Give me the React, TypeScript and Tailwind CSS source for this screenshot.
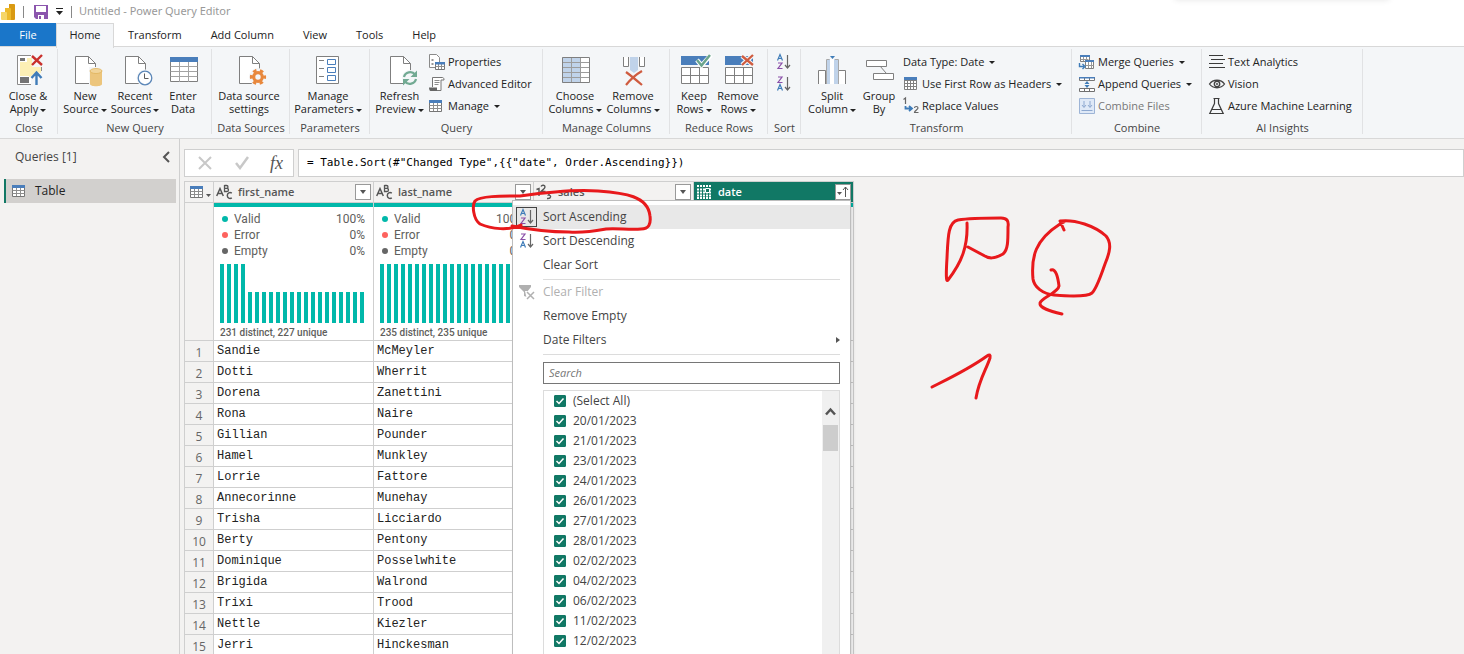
import { useState, type ReactNode } from "react";

const people = [
  ["Sandie", "McMeyler"],
  ["Dotti", "Wherrit"],
  ["Dorena", "Zanettini"],
  ["Rona", "Naire"],
  ["Gillian", "Pounder"],
  ["Hamel", "Munkley"],
  ["Lorrie", "Fattore"],
  ["Annecorinne", "Munehay"],
  ["Trisha", "Licciardo"],
  ["Berty", "Pentony"],
  ["Dominique", "Posselwhite"],
  ["Brigida", "Walrond"],
  ["Trixi", "Trood"],
  ["Nettle", "Kiezler"],
  ["Jerri", "Hinckesman"],
];

const dates = [
  "(Select All)",
  "20/01/2023",
  "21/01/2023",
  "23/01/2023",
  "24/01/2023",
  "26/01/2023",
  "27/01/2023",
  "28/01/2023",
  "02/02/2023",
  "04/02/2023",
  "06/02/2023",
  "11/02/2023",
  "12/02/2023",
];

const tabs = ["Transform", "Add Column", "View", "Tools", "Help"];

/* ---------- ribbon icons ---------- */

function Large({ children }: { children: ReactNode }) {
  return (
    <svg width="32" height="32" viewBox="0 0 32 32" fill="none" className="shrink-0 overflow-visible">
      {children}
    </svg>
  );
}

function Small({ children }: { children: ReactNode }) {
  return (
    <svg width="16" height="16" viewBox="0 0 16 16" fill="none" className="shrink-0 overflow-visible">
      {children}
    </svg>
  );
}

function Page() {
  return (
    <>
      <path d="M6.5 2.5h13l7 7v20h-20z" fill="#fff" stroke="#7f7f7f" />
      <path d="M19.5 2.5v7h7" stroke="#7f7f7f" />
    </>
  );
}

function CloseApplyIcon() {
  return (
    <Large>
      <path d="M5.5 1.5h24v29h-24z" fill="#fff" stroke="#8a8a8a" />
      <path d="M8 8h7V4h6v8l8 6v4l-10 8V22H8z" fill="#fdf0b5" />
      <path d="M19 0h14v13H19zM19 17h14v15H19z" fill="#f4f6f8" />
      <path d="M17 4h3v9h9v6l-5-1-6 5h-1z" fill="#fdf0b5" />
      <path d="M8 4h5v3H8zM8 23h9v6H8z" fill="#747474" />
      <path d="M20 2l10 9M30 1L20 11" stroke="#c9302c" strokeWidth="2.4" />
      <path d="M24.500 31V19M19.500 24l5-5.500 5 5.500" stroke="#3f7cb8" strokeWidth="2.4" />
    </Large>
  );
}

function NewSourceIcon() {
  return (
    <Large>
      <Page />
      <path d="M20 13h14v20H20z" fill="#f4f6f8" />
      <path d="M21 17v13c0 3 12 3 12 0V17z" fill="#ecc57c" />
      <ellipse cx="27" cy="17" rx="6" ry="2.500" fill="#f1d49a" stroke="#dfb25c" strokeWidth=".8" />
    </Large>
  );
}

function RecentIcon() {
  return (
    <Large>
      <Page />
      <circle cx="26" cy="24" r="8.500" fill="#f4f6f8" />
      <circle cx="26" cy="24" r="6.800" fill="#fff" stroke="#5c87b8" strokeWidth="1.300" />
      <path d="M25.500 19.500v5h4" stroke="#5c5c5c" />
    </Large>
  );
}

function EnterDataIcon() {
  return (
    <Large>
      <path d="M3.500 3.500h27v24h-27z" fill="#fff" stroke="#7f7f7f" />
      <path d="M3.500 12.500h27M3.500 17.500h27M3.500 22.500h27M12.500 8v20M21.500 8v20" stroke="#a3a3a3" />
      <path d="M3 3h28v5H3z" fill="#4a7ebb" />
    </Large>
  );
}

function SourceSettingsIcon() {
  return (
    <Large>
      <Page />
      <circle cx="25" cy="23" r="9" fill="#f4f6f8" />
      <circle cx="25" cy="23" r="6.600" stroke="#e8883d" strokeWidth="3" strokeDasharray="3.450 3.450" strokeDashoffset="1.700" />
      <circle cx="25" cy="23" r="4.300" stroke="#e8883d" strokeWidth="3.200" />
    </Large>
  );
}

function ParametersIcon() {
  return (
    <Large>
      <path d="M4.500 2.500h22v27h-22z" fill="#fff" stroke="#7f7f7f" />
      <path d="M7 6.500h5M7 14.500h5M7 22.500h5" stroke="#7f7f7f" />
      <path d="M15.500 5.500h8v5h-8zM15.500 13.500h8v5h-8zM15.500 21.500h8v5h-8z" stroke="#4a7ebb" />
    </Large>
  );
}

function RefreshIcon() {
  return (
    <Large>
      <Page />
      <circle cx="26" cy="24" r="8" fill="#f4f6f8" />
      <path d="M20 23c1-5 8-6.500 11-2.500M32 25c-1 5-8 6.500-11 2.500" stroke="#72aa93" strokeWidth="2.200" />
      <path d="M33 16.500v6.500h-6.500zM19 31.500V25h6.500z" fill="#72aa93" />
    </Large>
  );
}

function ChooseColumnsIcon() {
  return (
    <Large>
      <path d="M3 3h28v26H3z" fill="#fff" />
      <path d="M3 3h19v26H3z" fill="#c0d3ea" />
      <path d="M3.500 8.500h27M3.500 13.500h27M3.500 18.500h27M3.500 23.500h27M12.500 3v25M21.500 3v25" stroke="#9c9c9c" />
      <path d="M3.500 3.500h27v25h-27z" stroke="#7f7f7f" />
    </Large>
  );
}

function RemoveColumnsIcon() {
  return (
    <Large>
      <path d="M6.500 3v9.500h5V3M22.500 3v9.500h5V3" fill="#fff" stroke="#7f7f7f" />
      <path d="M13 3h8v13l-4 3-4-3z" fill="#c0d3ea" />
      <path d="M9 18c4 3 9 7 16 13M25 17C18 21 13 26 9 31" stroke="#cf5b3f" strokeWidth="2.200" />
    </Large>
  );
}

function RowsIcon({ keep }: { keep?: boolean }) {
  return (
    <Large>
      <path d="M3 2h28v9H3z" fill="#4a7ebb" />
      <path d="M3.500 13.500h27v16h-27z" fill="#fff" />
      <path d="M3.500 13.500h27v16h-27zM3.500 21.500h27M12.500 13.500v16M21.500 13.500v16" stroke="#7f7f7f" />
      {keep ? (
        <>
          <path d="M19 6l4.500 5.500L33 1" stroke="#fff" strokeWidth="4.500" />
          <path d="M19 6l4.500 5.500L32 1" stroke="#6ba58c" strokeWidth="2.500" />
        </>
      ) : (
        <>
          <path d="M20 2l11 9M31 1L20 11" stroke="#f4f6f8" strokeWidth="4.500" />
          <path d="M20 2l11 9M31 1L20 11" stroke="#cf5b3f" strokeWidth="2.300" />
        </>
      )}
    </Large>
  );
}

function SplitIcon() {
  return (
    <Large>
      <path d="M2.500 30V16.500h7V30M22.500 30V16.500h7V30" fill="#fff" stroke="#7f7f7f" />
      <path d="M11 5h11v25H11z" fill="#fff" />
      <path d="M11 5h3v25h-3zM18 5h4v25h-4z" fill="#c0d3ea" />
      <path d="M10.500 30V5.500h3M19 5.500h3.500V30" stroke="#a8a8a8" />
      <path d="M14 2h5l-2.500 3z" fill="#3f7cb8" />
    </Large>
  );
}

function GroupIcon() {
  return (
    <Large>
      <path d="M17 12l6 7" stroke="#7f7f7f" />
      <path d="M3.500 6.500h20v6h-20zM10.500 19.500h20v6h-20z" fill="#fff" stroke="#7f7f7f" />
    </Large>
  );
}

function TableIcon() {
  return (
    <Small>
      <path d="M.5 2.500h12v11H.5z" fill="#fff" stroke="#767676" />
      <path d="M.5 7.500h12M.5 10.500h12M4.500 5v8M8.500 5v8" stroke="#8e8e8e" />
      <path d="M0 2h13v3H0z" fill="#4a7ebb" />
    </Small>
  );
}

function PropertiesIcon() {
  return (
    <Small>
      <path d="M.5 .5h7l3 3v10H.5z" fill="#fff" stroke="#8a8a8a" />
      <path d="M2.500 6h2M2.500 10h2M6 10.500h2" stroke="#767676" strokeWidth="1.500" />
      <path d="M6.500 8.500h9v7h-9z" fill="#fff" stroke="#767676" />
      <path d="M6.500 12.500h9M9.500 10v5M12.500 10v5" stroke="#8e8e8e" />
      <path d="M6 8h10v2.500H6z" fill="#4a7ebb" />
    </Small>
  );
}

function EditorIcon() {
  return (
    <Small>
      <path d="M3.500 11V1.500h10c1 0 1.500 1 1.500 2.500h-3v10.500H2" fill="#fff" stroke="#767676" />
      <path d="M5.500 4.500h5M5.500 6.500h5M5.500 8.500h4" stroke="#8e8e8e" />
      <path d="M0 11.500h8V15H1.500C.5 15 0 13 0 11.500z" fill="#666" />
    </Small>
  );
}

function HeadersIcon() {
  return (
    <Small>
      <path d="M1 1h13v13H1z" fill="#fff" />
      <path d="M1.500 1.500h12v12h-12zM1.500 4.500h12M1.500 7.500h12M1.500 10.500h12M4.500 2v12M7.500 2v12M10.500 2v12" stroke="#808080" />
      <path d="M1 1h13v3H1z" fill="#4a7ebb" />
    </Small>
  );
}

function ReplaceIcon() {
  return (
    <Small>
      <path d="M.5 1.500L2.500 0v6" stroke="#666" strokeWidth="1.200" />
      <path d="M2.500 8v2.500H8M6 8l3 2.500L6 13" stroke="#3f7cb8" strokeWidth="1.800" />
      <path d="M11.500 10c0-2 3.500-2 3.500 0 0 1.500-3.500 2.500-3.500 4.500H15.500" stroke="#666" strokeWidth="1.200" />
    </Small>
  );
}

function MergeIcon() {
  return (
    <Small>
      <path d="M1.500 1.500h9v6h-9z" fill="#fff" stroke="#808080" />
      <path d="M1 1h10v2H1z" fill="#4a7ebb" />
      <path d="M4.500 3v4M7.500 3v4M1.500 5.500h8" stroke="#999" />
      <path d="M6.500 6.500h8v8h-8z" fill="#fff" stroke="#808080" />
      <path d="M6 6h9v2H6z" fill="#4a7ebb" />
      <path d="M9.500 8v6M12.500 8v6M6.500 11.500h8" stroke="#999" />
      <path d="M.5 9v3.500H5M3.500 10l2.500 2.500L3.500 15" stroke="#3f7cb8" strokeWidth="1.400" />
    </Small>
  );
}

function AppendIcon() {
  return (
    <Small>
      <path d="M.5 1.500h15v3H.5zM5.500 2v3M10.500 2v3" fill="#fff" stroke="#777" />
      <path d="M.5 12.500h15v3H.5zM5.500 12v3M10.500 12v3" fill="#fff" stroke="#707070" />
      <path d="M8 5l2.500 3h-5zM8 12L5.500 9h5z" fill="#3f7cb8" />
      <path d="M0 1h16v1.500H0z" fill="#4a7ebb" />
    </Small>
  );
}

function CombineIcon() {
  return (
    <Small>
      <path d="M.5 .5h15v15H.5z" fill="#dfe9f7" stroke="#9db4d6" />
      <path d="M5 3v6M3 7l2 2.500L7 7M11 3v6M9 7l2 2.500L13 7M2.500 12.500h11" stroke="#8da8d0" />
    </Small>
  );
}

function TextIcon() {
  return (
    <Small>
      <path d="M0 1.500h14M2 5.500h14M0 9.500h14M0 13.500h16" stroke="#3b3b3b" />
    </Small>
  );
}

function EyeIcon() {
  return (
    <Small>
      <path d="M.5 8c3.500-5 11.500-5 15 0-3.500 5-11.500 5-15 0z" stroke="#444" strokeWidth="1.300" />
      <circle cx="8" cy="8" r="2.700" stroke="#444" strokeWidth="1.400" />
      <circle cx="8" cy="8" r="1" fill="#444" />
    </Small>
  );
}

function FlaskIcon() {
  return (
    <Small>
      <path d="M4.500 .5h6M5.500 .5v5L.8 15.500h13.400L9.500 5.500v-5M3 11.500h9" stroke="#3b3b3b" strokeWidth="1.200" />
    </Small>
  );
}

function SortIcon({ desc }: { desc?: boolean }) {
  return (
    <Small>
      <g strokeWidth="1.200" transform={desc ? "translate(0 8)" : undefined}>
        <path d="M1.500 6.500L4 .5l2.500 6M2.500 4.500h3" stroke="#3f7cb8" />
      </g>
      <g strokeWidth="1.200" transform={desc ? "translate(0 -8)" : undefined}>
        <path d="M2 9h4l-4 5.500h4.500" stroke="#8a4fa8" />
      </g>
      <path d="M11.500 1v13M9 11l2.500 3L14 11" stroke="#666" strokeWidth="1.200" />
    </Small>
  );
}

function Caret() {
  return (
    <svg width="6" height="3" viewBox="0 0 6 3" className="ml-0.5 inline-block shrink-0 align-middle">
      <path d="M0 0h6L3 3z" fill="#222" />
    </svg>
  );
}

/* ---------- ribbon parts ---------- */

function Group({ label, className, children }: { label: string; className: string; children: ReactNode }) {
  return (
    <section className={`relative flex shrink-0 flex-col pt-1 ${className}`}>
      <div className="flex h-[72px]">{children}</div>
      <h2 className="text-center text-[11px] leading-4 text-[#444]">{label}</h2>
      <span className="absolute top-0.5 right-0 bottom-0.5 w-px bg-[#e1e2e4]" />
    </section>
  );
}

function BigButton({ icon, lines, menu, className }: { icon: ReactNode; lines: string[]; menu?: boolean; className: string }) {
  return (
    <button className={`flex shrink-0 flex-col items-center pt-[3px] text-[11px] leading-[13px] whitespace-nowrap ${className}`}>
      {icon}
      <span className="mt-[3px]">{lines[0]}</span>
      <span>
        {lines[1]}
        {menu && <Caret />}
      </span>
    </button>
  );
}

function SmallButton({ icon, label, menu, disabled }: { icon?: ReactNode; label: string; menu?: boolean; disabled?: boolean }) {
  return (
    <button
      disabled={disabled}
      className="flex h-[22px] items-center gap-[3px] text-[11px] whitespace-nowrap disabled:text-[#777]"
    >
      {icon}
      <span>{label}</span>
      {menu && <Caret />}
    </button>
  );
}

function Ribbon() {
  return (
    <div className="flex h-[93px] shrink-0 overflow-hidden border-y border-[#d8d8d8] bg-[#f4f6f8] pb-0.5">
      <Group label="Close" className="w-[58px]">
        <BigButton icon={<CloseApplyIcon />} lines={["Close &", "Apply"]} menu className="w-14" />
      </Group>
      <Group label="New Query" className="w-[154px]">
        <BigButton icon={<NewSourceIcon />} lines={["New", "Source"]} menu className="ml-0.5 w-[50px]" />
        <BigButton icon={<RecentIcon />} lines={["Recent", "Sources"]} menu className="w-[50px]" />
        <BigButton icon={<EnterDataIcon />} lines={["Enter", "Data"]} className="w-[46px]" />
      </Group>
      <Group label="Data Sources" className="w-[78px]">
        <BigButton icon={<SourceSettingsIcon />} lines={["Data source", "settings"]} className="w-[74px]" />
      </Group>
      <Group label="Parameters" className="w-[80px]">
        <BigButton icon={<ParametersIcon />} lines={["Manage", "Parameters"]} menu className="w-[76px]" />
      </Group>
      <Group label="Query" className="w-[173px]">
        <BigButton icon={<RefreshIcon />} lines={["Refresh", "Preview"]} menu className="w-[59px]" />
        <div>
          <SmallButton icon={<PropertiesIcon />} label="Properties" />
          <SmallButton icon={<EditorIcon />} label="Advanced Editor" />
          <SmallButton icon={<TableIcon />} label="Manage" menu />
        </div>
      </Group>
      <Group label="Manage Columns" className="w-[127px]">
        <BigButton icon={<ChooseColumnsIcon />} lines={["Choose", "Columns"]} menu className="ml-0.5 w-[60px]" />
        <BigButton icon={<RemoveColumnsIcon />} lines={["Remove", "Columns"]} menu className="w-14" />
      </Group>
      <Group label="Reduce Rows" className="w-[98px]">
        <BigButton icon={<RowsIcon keep />} lines={["Keep", "Rows"]} menu className="ml-0.5 w-11" />
        <BigButton icon={<RowsIcon />} lines={["Remove", "Rows"]} menu className="w-11" />
      </Group>
      <Group label="Sort" className="w-[33px]">
        <div className="pl-2">
          <button aria-label="Sort ascending" className="flex h-[22px] items-center">
            <SortIcon />
          </button>
          <button aria-label="Sort descending" className="flex h-[22px] items-center">
            <SortIcon desc />
          </button>
        </div>
      </Group>
      <Group label="Transform" className="w-[271px]">
        <BigButton icon={<SplitIcon />} lines={["Split", "Column"]} menu className="ml-1 w-[54px]" />
        <BigButton icon={<GroupIcon />} lines={["Group", "By"]} className="w-10" />
        <div className="pl-1">
          <SmallButton label="Data Type: Date" menu />
          <SmallButton icon={<HeadersIcon />} label="Use First Row as Headers" menu />
          <SmallButton icon={<ReplaceIcon />} label="Replace Values" />
        </div>
      </Group>
      <Group label="Combine" className="w-[130px]">
        <div className="pl-[7px]">
          <SmallButton icon={<MergeIcon />} label="Merge Queries" menu />
          <SmallButton icon={<AppendIcon />} label="Append Queries" menu />
          <SmallButton icon={<CombineIcon />} label="Combine Files" disabled />
        </div>
      </Group>
      <Group label="AI Insights" className="w-[161px]">
        <div className="pl-[7px]">
          <SmallButton icon={<TextIcon />} label="Text Analytics" />
          <SmallButton icon={<EyeIcon />} label="Vision" />
          <SmallButton icon={<FlaskIcon />} label="Azure Machine Learning" />
        </div>
      </Group>
    </div>
  );
}

/* ---------- title bar and tabs ---------- */

function TitleBar() {
  return (
    <header className="relative flex h-[23px] shrink-0 items-center pl-px text-[#999]">
      <svg width="14" height="16" viewBox="0 0 14 16">
        <path d="M8 0h5q1 0 1 1v14q0 1-1 1H8z" fill="#d99a12" />
        <path d="M4 4h5q1 0 1 1v11H4z" fill="#edba2b" />
        <path d="M0 8h5q1 0 1 1v7H1q-1 0-1-1z" fill="#f6d667" />
      </svg>
      <span className="ml-2 h-3 w-px bg-[#888]" />
      <button aria-label="Save" className="ml-2.5">
        <svg width="14" height="14" viewBox="0 0 14 14">
          <path d="M0 0h14v14H2l-2-2z" fill="#8b55ad" />
          <path d="M2 1h10v6H2zM4 10h6v4H4z" fill="#fff" />
          <path d="M5 11h2v3H5z" fill="#8b55ad" />
        </svg>
      </button>
      <button aria-label="Customize toolbar" className="ml-2">
        <svg width="7" height="7" viewBox="0 0 7 7">
          <path d="M0 0h7v1H0zM0 3h7L3.500 7z" fill="#222" />
        </svg>
      </button>
      <span className="ml-2 h-3 w-px bg-[#888]" />
      <h1 className="ml-[7px] font-['Noto_Sans',sans-serif] text-[11px]">Untitled - Power Query Editor</h1>
      <div className="absolute -top-2 right-[74px] h-2 w-[216px] rounded-lg shadow-[0_0_6px_rgba(0,0,0,0.1)]" />
    </header>
  );
}

function Tabs() {
  return (
    <nav className="flex h-6 shrink-0 text-[11px]">
      <button className="w-14 bg-[#1a76c9] text-white">File</button>
      <button className="relative z-10 -mb-px w-[58px] border-x border-t border-[#d8d8d8] bg-[#f4f6f8] pb-0.5">Home</button>
      <div className="flex gap-[29px] pl-[14px]">
        {tabs.map((tab) => (
          <button key={tab}>{tab}</button>
        ))}
      </div>
    </nav>
  );
}

/* ---------- data grid ---------- */

function AbcIcon() {
  return (
    <span aria-hidden className="relative h-4 w-4 shrink-0 text-[#555]">
      <svg width="17" height="16" viewBox="0 0 17 16" fill="none" stroke="#555" strokeWidth="1.500">
        <path d="M.7 12L4 4.500 7.300 12M2 9.500h4" />
        <path d="M8.500 1v6.500h2.300c2.200 0 2.200-3.200 0-3.200H8.500h2c2 0 2-2.800 0-2.800h-2" strokeWidth="1.300" />
        <path d="M15.800 9.200c-2-1.400-4.500-.2-4.500 2.300s2.500 3.700 4.500 2.300" />
      </svg>
    </span>
  );
}

function NumberIcon() {
  return (
    <svg width="16" height="16" viewBox="0 0 16 16" fill="none" stroke="#555" strokeWidth="1.400" className="shrink-0">
      <path d="M.5 5.500l2.500-1V12" />
      <path d="M5 2.500c1-2 4-1.500 4 .5 0 1.500-2 2.500-4 4.500h4.500" />
      <path d="M11 8.500h3.500L12.500 11c3 0 3 4-1.500 3.500" />
    </svg>
  );
}

function DateIcon() {
  return (
    <svg width="16" height="15" viewBox="0 0 16 15" fill="none" className="shrink-0">
      <path d="M1 1h15M1 13h15" stroke="#fff" strokeWidth="2" strokeDasharray="2 1" />
      <path d="M1 4.500h15M1 7.500h15M1 10.500h15" stroke="#fff" strokeWidth="2" strokeDasharray="2 1" />
      <path d="M9.500 3.500h4v4h-4z" fill="#117865" stroke="#fff" />
    </svg>
  );
}

function Header({ name, icon, active }: { name: string; icon: ReactNode; active?: boolean }) {
  return (
    <th
      scope="col"
      className={
        active
          ? "border-r border-[#cfcfcf] bg-[#117865] p-0 text-white"
          : "border-r border-[#cfcfcf] bg-[#f3f2f1] p-0 text-[#555]"
      }
    >
      <div className="flex h-5 items-center gap-1.5 pr-0.5 pl-0.5">
        {icon}
        <span className="flex-1 text-left text-[11px] font-semibold">{name}</span>
        <button
          aria-label={`Filter ${name}`}
          className="flex size-4 items-center justify-center border border-[#999] bg-white"
        >
          {active ? (
            <svg width="12" height="12" viewBox="0 0 12 12" fill="none">
              <path d="M0 6h5L2.500 9z" fill="#555" />
              <path d="M8.500 11V1M6 4l2.500-3L11 4" stroke="#555" />
            </svg>
          ) : (
            <svg width="6" height="4" viewBox="0 0 6 4">
              <path d="M0 0h6L3 4z" fill="#555" />
            </svg>
          )}
        </button>
      </div>
      <div className="h-[5px] border-t border-[#cfcfcf] bg-[#01b8aa]" />
    </th>
  );
}

function Profile({ bars, summary }: { bars: number[]; summary: string }) {
  const stats = [
    { name: "Valid", value: "100%", dot: "bg-[#01b8aa]" },
    { name: "Error", value: "0%", dot: "bg-[#fd625e]" },
    { name: "Empty", value: "0%", dot: "bg-[#666]" },
  ];
  return (
    <td className="border-r border-b border-[#cfcfcf] bg-white p-0 align-top">
      <div className="h-[133px] px-2 pt-1 font-[Roboto,sans-serif] text-[#605e5c]">
        {stats.map((s) => (
          <div key={s.name} className="flex h-4 items-center text-[12px]">
            <span className={`mr-1.5 size-1.5 rounded-full ${s.dot}`} />
            <span className="flex-1 text-left">{s.name}</span>
            <span>{s.value}</span>
          </div>
        ))}
        <div className="mt-[5px] -mr-2 -ml-2 flex h-[59px] items-end gap-[3px] pl-1.5">
          {bars.map((h, i) => (
            <span key={i} className="w-1 shrink-0 bg-[#01b8aa]" style={{ height: h }} />
          ))}
        </div>
        <div className="-ml-0.5 pt-[3px] text-[10px] leading-[14px] font-medium whitespace-nowrap">{summary}</div>
      </div>
    </td>
  );
}

const firstBars = Array.from({ length: 21 }, (_, i) => (i < 4 ? 59 : 31));
const fullBars = Array.from({ length: 21 }, () => 59);

function DataGrid() {
  return (
    <table className="w-[670px] table-fixed border-separate border-spacing-0 border-t border-l border-[#cfcfcf]">
      <colgroup>
        <col className="w-[29px]" />
        <col className="w-[160px]" />
        <col className="w-[160px]" />
        <col className="w-[160px]" />
        <col className="w-[160px]" />
      </colgroup>
      <thead>
        <tr>
          <th className="border-r border-[#cfcfcf] bg-[#f3f2f1] p-0 align-top">
            <button aria-label="Table options" className="flex h-5 w-full items-center pl-[5px]">
              <TableIcon />
              <svg width="5" height="3" viewBox="0 0 5 3" className="mt-1.5">
                <path d="M0 0h5L2.500 3z" fill="#555" />
              </svg>
            </button>
            <div className="h-[5px] border-t border-[#cfcfcf]" />
          </th>
          <Header name="first_name" icon={<AbcIcon />} />
          <Header name="last_name" icon={<AbcIcon />} />
          <Header name="sales" icon={<NumberIcon />} />
          <Header name="date" icon={<DateIcon />} active />
        </tr>
      </thead>
      <tbody>
        <tr>
          <td className="border-r border-b border-[#cfcfcf] p-0" />
          <Profile bars={firstBars} summary="231 distinct, 227 unique" />
          <Profile bars={fullBars} summary="235 distinct, 235 unique" />
          <td className="border-r border-b border-[#cfcfcf] bg-white p-0" />
          <td className="border-r border-b border-[#cfcfcf] bg-white p-0" />
        </tr>
        {people.map(([first, last], i) => (
          <tr key={i} className="h-[21px] font-['Liberation_Mono',monospace] text-[12px] leading-4 text-[#222]">
            <th
              scope="row"
              className="border-r border-b border-[#cfcfcf] p-0 pt-1 font-['Open_Sans',sans-serif] text-[12px] font-normal text-[#666]"
            >
              {i + 1}
            </th>
            <td className="border-r border-b border-[#cfcfcf] bg-white p-0 pl-[3px]">{first}</td>
            <td className="border-r border-b border-[#cfcfcf] bg-white p-0 pl-[3px]">{last}</td>
            <td className="border-r border-b border-[#cfcfcf] bg-white p-0" />
            <td className="border-r border-b border-[#cfcfcf] bg-white p-0" />
          </tr>
        ))}
      </tbody>
    </table>
  );
}

/* ---------- filter menu ---------- */

function MenuItem({ icon, label, selected, disabled, sub }: { icon?: ReactNode; label: string; selected?: boolean; disabled?: boolean; sub?: boolean }) {
  return (
    <button
      disabled={disabled}
      className={`flex h-6 w-full items-center text-left disabled:text-[#b0b0b0] ${selected ? "bg-[#e8e8e8]" : ""}`}
    >
      <span
        className={`mr-1.5 ml-[3px] flex h-5 w-[21px] items-center justify-center ${selected ? "border border-[#444]" : ""}`}
      >
        {icon}
      </span>
      <span className="flex-1">{label}</span>
      {sub && (
        <svg width="4" height="6" viewBox="0 0 4 6" className="mr-2.5">
          <path d="M0 0v6l4-3z" fill="#555" />
        </svg>
      )}
    </button>
  );
}

function FilterMenu() {
  const [search, setSearch] = useState("");
  const [off, setOff] = useState<string[]>([]);

  const toggle = (d: string) => setOff(off.includes(d) ? off.filter((x) => x !== d) : [...off, d]);

  return (
    <div className="absolute top-[19px] left-[328px] w-[339px] border border-[#bdbdbd] bg-white pt-1 text-[12px] text-[#444] shadow-[2px_2px_3px_rgba(0,0,0,0.15)]">
      <MenuItem icon={<SortIcon />} label="Sort Ascending" selected />
      <MenuItem icon={<SortIcon desc />} label="Sort Descending" />
      <MenuItem label="Clear Sort" />
      <hr className="mt-0.5 mr-2.5 ml-[30px] border-[#dcdcdc]" />
      <MenuItem
        icon={
          <Small>
            <path d="M0 1h12v2L8 8v5l-3-1V8L0 3z" fill="#b0b0b0" />
            <path d="M6 7h10v9H8z" fill="#fff" />
            <path d="M8 8l7 7M15 8l-7 7" stroke="#b0b0b0" strokeWidth="1.500" />
          </Small>
        }
        label="Clear Filter"
        disabled
      />
      <MenuItem label="Remove Empty" />
      <MenuItem label="Date Filters" sub />
      <hr className="mt-0.5 mr-2.5 ml-[30px] border-[#dcdcdc]" />
      <div className="mt-[7px] mr-2.5 ml-[30px]">
        <input
          type="text"
          aria-label="Search"
          placeholder="Search"
          value={search}
          onChange={(e) => setSearch(e.target.value)}
          className="block h-[22px] w-full border border-[#767676] px-[5px] pb-px text-[11px] outline-none placeholder:text-[#767676] placeholder:italic"
        />
        <div className="mt-1.5 flex border border-[#dcdcdc]">
          <div className="flex-1 pb-5 pl-2.5">
            {dates
              .filter((d) => d.includes(search))
              .map((d) => (
                <label key={d} className="flex h-5 items-center gap-[7px]">
                  <span className="relative size-3">
                    <input
                      type="checkbox"
                      checked={!off.includes(d)}
                      onChange={() => toggle(d)}
                      className="peer block size-3 appearance-none rounded-[1px] border border-[#117865] checked:bg-[#117865]"
                    />
                    <svg viewBox="0 0 12 12" className="pointer-events-none absolute inset-0 hidden size-3 peer-checked:block">
                      <path d="M2.500 6l2.500 2.500 4.500-5" fill="none" stroke="#fff" strokeWidth="1.500" />
                    </svg>
                  </span>
                  {d}
                </label>
              ))}
          </div>
          <div className="flex w-[17px] flex-col items-center bg-[#f0f0f0] pt-4">
            <svg width="11" height="9" viewBox="0 0 11 9">
              <path d="M1 7.500l4.500-5 4.500 5" fill="none" stroke="#555" strokeWidth="2.500" />
            </svg>
            <div className="mt-[9px] h-[26px] w-[15px] bg-[#cdcdcd]" />
          </div>
        </div>
      </div>
    </div>
  );
}

/* Freehand ink drawn over the window */
function Ink() {
  return (
    <svg className="pointer-events-none absolute top-0 left-0 h-full w-full" fill="none" stroke="#e8191c" strokeWidth="3" strokeLinecap="round" strokeLinejoin="round">
      <path d="M521 225C509 231 491 229 480 224C473 219 472 205 475 201C480 196 500 196 520 196C548 192 574 189 598 191C625 193 648 196 650 216C651 224 649 229 641 229C630 230 616 228 606 229C595 231 585 233 569 232C550 232 532 230 512 226" />
      <path d="M967 223C968 246 962 262 948 280C946 283 946 274 947 258C948 237 948 222 958 220C970 218 986 218 1001 218C1007 218 1009 221 1008 227C1008 241 1008 250 1003 254C994 259 989 259 983 255L968 247" />
      <path d="M1064 230L1060 221C1075 219 1095 226 1106 236C1112 243 1110 252 1105 264C1101 275 1097 288 1092 293C1087 297 1066 296 1054 295C1043 294 1034 287 1033 279C1031 257 1035 240 1060 224L1064 222" />
      <path d="M1051 270C1056 268 1058 278 1059 286C1058 293 1042 297 1040 303C1039 308 1050 311 1062 314" />
      <path d="M932 387C952 377 969 369 987 356Q991 353 990 358C986 370 979 380 976 398" />
    </svg>
  );
}

export default function App() {
  return (
    <div className="relative flex h-screen flex-col overflow-hidden bg-white font-['Open_Sans','Noto_Sans',sans-serif] text-[#222]">
      <TitleBar />
      <Tabs />
      <div className="-mt-px flex shrink-0 flex-col">
        <Ribbon />
      </div>
      <div className="flex min-h-0 flex-1 bg-[#f3f2f1]">
        <aside className="w-[180px] shrink-0 border-r border-[#cfcfcf]">
          <div className="flex h-10 items-center justify-between pr-[9px] pb-1 pl-[15px] text-[#444]">
            <h2 className="text-[12px]">Queries [1]</h2>
            <button aria-label="Collapse queries">
              <svg width="8" height="12" viewBox="0 0 8 12">
                <path d="M7 1L2 6l5 5" fill="none" stroke="#555" strokeWidth="2" />
              </svg>
            </button>
          </div>
          <button className="ml-1 flex h-6 w-[172px] items-center gap-[7px] border-l-2 border-[#117865] bg-[#d2d0ce] pl-1.5 text-[12px]">
            <TableIcon />
            Table
          </button>
        </aside>
        <main className="flex min-w-0 flex-1 flex-col overflow-hidden pt-2.5 pl-1">
          <div className="flex h-7 shrink-0 gap-1">
            <div className="flex w-[110px] items-center justify-between border border-[#cfcfcf] bg-white pr-2.5 pl-3">
              <button aria-label="Cancel">
                <svg width="16" height="14" viewBox="0 0 16 14">
                  <path d="M2 1l12 12M14 1L2 13" stroke="#c8c8c8" strokeWidth="2" />
                </svg>
              </button>
              <button aria-label="Commit">
                <svg width="14" height="14" viewBox="0 0 14 14">
                  <path d="M1 7l4 5 8-11" fill="none" stroke="#c8c8c8" strokeWidth="2.500" />
                </svg>
              </button>
              <button aria-label="Insert step" className="font-['Liberation_Serif',serif] text-[18px] leading-5 text-[#555] italic">
                fx
              </button>
            </div>
            <input
              type="text"
              aria-label="Formula"
              defaultValue={'= Table.Sort(#"Changed Type",{{"date", Order.Ascending}})'}
              className="min-w-0 flex-1 border border-[#cfcfcf] bg-white px-2 font-['DejaVu_Sans_Mono',monospace] text-[11px] text-black outline-none"
            />
          </div>
          <div className="relative mt-1">
            <DataGrid />
            <FilterMenu />
          </div>
        </main>
      </div>
      <Ink />
    </div>
  );
}
